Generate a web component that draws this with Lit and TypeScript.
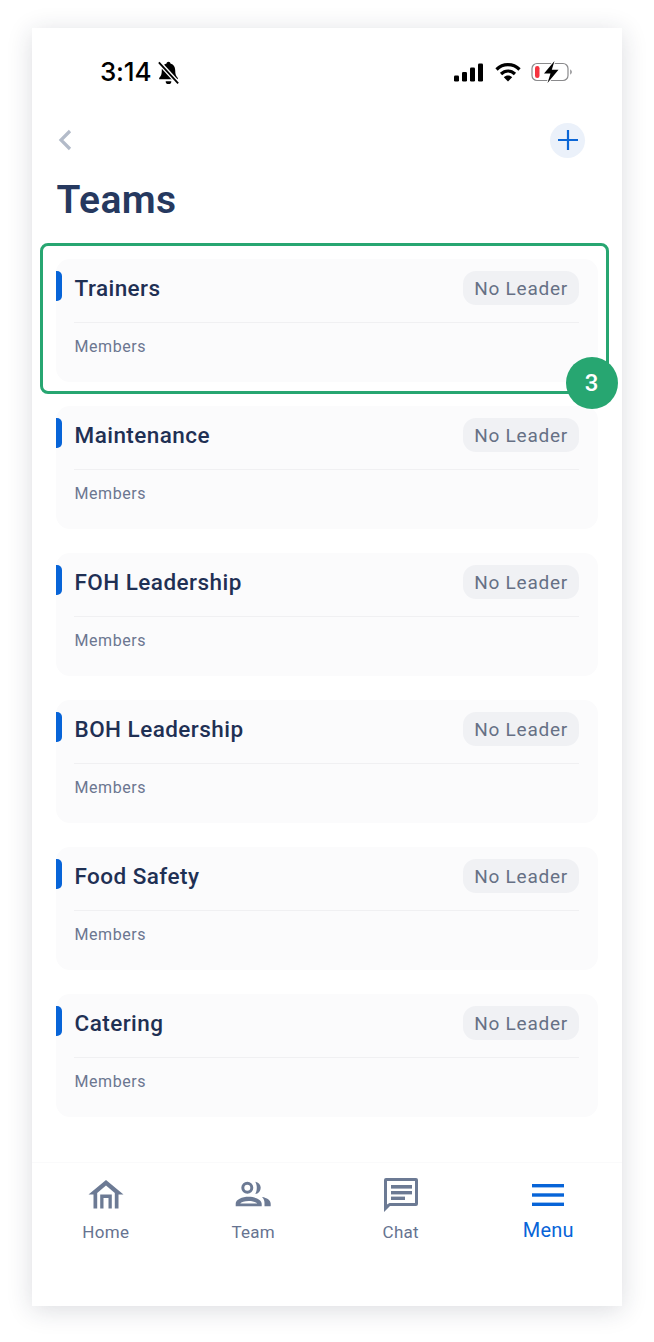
import { LitElement, html, css, svg } from "lit";
import { customElement } from "lit/decorators.js";

const TEAMS = ["Trainers", "Maintenance", "FOH Leadership", "BOH Leadership", "Food Safety", "Catering"];

@customElement("app-root")
export class AppRoot extends LitElement {
  static styles = css`
    :host { display: block; font-family: Roboto, "Liberation Sans", sans-serif; }
    .page { width: 654px; height: 1342px; padding: 28px 32px 36px; box-sizing: border-box; background: #fff; overflow: hidden; }
    .frame { position: relative; height: 1278px; background: #fff; display: flex; flex-direction: column;
      box-shadow: 0 4px 24px rgba(30, 40, 60, 0.16); }
    .status { height: 60px; flex: none; display: flex; align-items: flex-end; justify-content: space-between; padding: 0 49px 0 68px; box-sizing: border-box; }
    .time-wrap { display: flex; align-items: center; gap: 5px; height: 32px; }
    .time { font-family: Inter, Roboto, sans-serif; font-size: 26px; font-weight: 500; color: #000; letter-spacing: -0.2px; line-height: 32px; }
    .indicators { display: flex; align-items: center; gap: 10.5px; height: 32px; }
    .nav { height: 38px; margin-top: 33px; flex: none; display: flex; align-items: center; justify-content: space-between; padding: 0 37px 0 26px; }
    .nav svg { display: block; }
    .add { width: 35px; height: 35px; border-radius: 50%; background: #ebf1fa; display: flex; align-items: center; justify-content: center; }
    h1 { margin: 18px 0 0 24.5px; height: 46px; font-size: 39px; line-height: 46px; font-weight: 600; letter-spacing: 0.4px; color: #26395f; flex: none; }
    .list { position: relative; margin: 36px 24px 0; display: flex; flex-direction: column; gap: 24px; flex: none; }
    .card { position: relative; height: 123px; background: #fbfbfc; border-radius: 14px; padding: 12px 19px 0 18px; box-sizing: border-box; }
    .accent { position: absolute; left: 0; top: 12px; width: 6px; height: 30px; background: #0764d8; border-radius: 0 5px 5px 0; }
    .row { display: flex; align-items: center; justify-content: space-between; height: 34px; padding-bottom: 17px; border-bottom: 1px solid #f0f0f2; box-sizing: content-box; }
    .name { margin-left: 0.5px; font-size: 22.5px; font-weight: 500; color: #1f3054; line-height: 34px; letter-spacing: 0.45px; }
    .pill { height: 34px; padding: 0 11px; background: #f0f1f4; border-radius: 13px; font-size: 19px; line-height: 36px; color: #667085; letter-spacing: 0.75px; }
    .members { margin: 14px 0 0 0.5px; font-size: 16px; line-height: 20px; color: #6b7690; letter-spacing: 0.55px; }
    .ring { position: absolute; left: -16px; top: -16px; width: 569px; height: 151px; box-sizing: border-box; border: 3px solid #27a671; border-radius: 8px; pointer-events: none; }
    .badge { position: absolute; left: 510px; top: 98px; width: 52px; height: 52px; border-radius: 50%; background: #27a671; color: #fff; font-size: 24px; font-weight: 500; line-height: 52px; text-align: center; text-indent: -1px; }
    .tabs { position: absolute; left: 0; right: 0; top: 1134px; height: 144px; border-top: 1px solid #fafafb; display: grid; grid-template-columns: repeat(4, 147.5px); box-sizing: border-box; background: #fff; }
    .tab { display: flex; flex-direction: column; align-items: center; color: #667390; font-size: 17px; letter-spacing: 0.3px; }
    .tab .ic { height: 42px; margin-top: 11px; display: flex; align-items: center; justify-content: center; }
    .tab .lb { line-height: 22px; margin-top: 5px; }
    .tab.active { color: #0764d8; font-size: 20px; letter-spacing: 0.2px; }
    .tab.active .lb { margin-top: 1px; line-height: 26px; }
  `;

  private bell() {
    return html`<svg width="25" height="25" viewBox="0 0 22 22">
      <path d="M11 1.500c1 0 1.600.7 1.700 1.500 3 .8 4.200 3.300 4.200 6.200 0 3.500.7 5 2.300 6.600v1.200H2.800v-1.200c1.600-1.600 2.300-3.100 2.300-6.600 0-2.900 1.200-5.400 4.200-6.200.1-.8.7-1.500 1.700-1.500z" fill="#000"/>
      <path d="M8.500 18.600h5a2.500 2.500 0 0 1-5 0z" fill="#000"/>
      <path d="M2.500 2 19.500 20.500" stroke="#fff" stroke-width="4"/>
      <path d="M2.500 2 19.500 20.500" stroke="#000" stroke-width="1.600"/>
    </svg>`;
  }

  private statusIcons() {
    return html`<div class="indicators">
      <svg width="30" height="19" viewBox="0 0 30 19">
        <rect x="0" y="12.500" width="5" height="6" rx="1.300" fill="#000"/>
        <rect x="8" y="9" width="5" height="9.500" rx="1.300" fill="#000"/>
        <rect x="16" y="4.500" width="5" height="14" rx="1.300" fill="#000"/>
        <rect x="24" y="0.500" width="5" height="18" rx="1.300" fill="#000"/>
      </svg>
      <svg width="26" height="19" viewBox="0 0 26 19">
        <path d="M1.500 6.500C4.500 3.500 8.500 1.700 13 1.700s8.500 1.800 11.500 4.800" fill="none" stroke="#000" stroke-width="3.200"/>
        <path d="M6 11c2-1.900 4.300-3 7-3s5 1.100 7 3" fill="none" stroke="#000" stroke-width="3.200"/>
        <path d="M8.800 14.200c1.200-1 2.600-1.700 4.200-1.700s3 .7 4.200 1.700L13 18.600z" fill="#000"/>
      </svg>
      <svg width="42" height="22" viewBox="0 0 42 22">
        <rect x="1" y="2.500" width="36" height="17" rx="5" fill="none" stroke="#8a8a8c" stroke-width="1.200"/>
        <rect x="4" y="5" width="4.500" height="12" rx="2.200" fill="#f5333f"/>
        <path d="M39 8.500c1.200.3 2 1.300 2 2.500s-.8 2.200-2 2.500z" fill="#a5a5a7"/>
        <path d="M23.500 0 13 12.500h6.500L16.500 22 27.500 8.800h-6.700z" fill="#fff" stroke="#fff" stroke-width="2"/>
        <path d="M23.500 0 13 12.500h6.500L16.500 22 27.500 8.800h-6.700z" fill="#000"/>
      </svg>
    </div>`;
  }

  private tabIcon(name: string) {
    if (name === "Home") {
      return svg`<svg width="36" height="32" viewBox="0 0 36 32">
        <path d="M18 1 .5 15.500H5.500V29.500H30.500V15.500H35.500z" fill="#6c7a94"/>
        <path d="M18 6.500 9.200 14V30H26.800V14z" fill="#fff"/>
        <path d="M12.200 29.500V15.500H23.800V29.500H20.500V19H15.500V29.500z" fill="#6c7a94"/>
      </svg>`;
    }
    if (name === "Team") {
      return svg`<svg width="38" height="28" viewBox="0 0 38 28"><g transform="translate(1 0)" fill="#6c7a94">
        <path fill-rule="evenodd" d="M12.300.7a6 6 0 1 1 0 12 6 6 0 0 1 0-12zm0 3a3 3 0 1 0 0 6 3 3 0 0 0 0-6z"/>
        <path d="M20.300.7A6.200 6.200 0 0 1 20.300 13C21.300 11 21.800 9 21.800 6.800S21.300 2.700 20.300.7z"/>
        <path fill-rule="evenodd" d="M.7 25.300v-2.500C.7 18.500 7 15.800 13.700 15.800S26.700 18.500 26.700 22.800v2.500zM5.200 22.600c1-1.500 4.300-2.600 8.500-2.600S21.200 21.100 22.200 22.600z"/>
        <path d="M27 16C32 16.800 35.700 19.200 35.700 22.800v2.500H29.500v-3C29.500 20 29 18 27 16z"/>
      </g></svg>`;
    }
    if (name === "Chat") {
      return svg`<svg width="36" height="36" viewBox="0 0 36 36">
        <path fill-rule="evenodd" d="M3 1h30a2 2 0 0 1 2 2v24a2 2 0 0 1-2 2H7l-6 6V3a2 2 0 0 1 2-2zm1 3v23.500L6.500 26H32V4z" fill="#6c7a94"/>
        <rect x="8" y="8" width="21" height="3.600" fill="#6c7a94"/>
        <rect x="8" y="14" width="21" height="3.400" fill="#6c7a94"/>
        <rect x="8" y="19.600" width="14" height="3.400" fill="#6c7a94"/>
      </svg>`;
    }
    return svg`<svg width="32" height="22" viewBox="0 0 32 22">
      <rect x="0" y="0" width="32" height="3.400" fill="#0764d8"/>
      <rect x="0" y="9.300" width="32" height="3.400" fill="#0764d8"/>
      <rect x="0" y="18.600" width="32" height="3.400" fill="#0764d8"/>
    </svg>`;
  }

  render() {
    return html`<div class="page"><div class="frame">
      <div class="status">
        <div class="time-wrap"><span class="time">3:14</span>${this.bell()}</div>
        ${this.statusIcons()}
      </div>
      <div class="nav">
        <svg width="14" height="22" viewBox="0 0 14 22"><path d="M12 2 3 11l9 9" fill="none" stroke="#b3bbc9" stroke-width="3.200"/></svg>
        <div class="add"><svg width="22" height="22" viewBox="0 0 22 22"><path d="M11 1v20M1 11h20" fill="none" stroke="#0b66d6" stroke-width="2.200"/></svg></div>
      </div>
      <h1>Teams</h1>
      <div class="list">
        ${TEAMS.map((t) => html`<div class="card">
          <span class="accent"></span>
          <div class="row"><span class="name">${t}</span><span class="pill">No Leader</span></div>
          <div class="members">Members</div>
        </div>`)}
        <div class="ring"></div>
        <div class="badge">3</div>
      </div>
      <div class="tabs">
        ${["Home", "Team", "Chat", "Menu"].map((n) => html`<div class="tab ${n === "Menu" ? "active" : ""}">
          <div class="ic">${this.tabIcon(n)}</div><div class="lb">${n}</div>
        </div>`)}
      </div>
    </div></div>`;
  }
}
